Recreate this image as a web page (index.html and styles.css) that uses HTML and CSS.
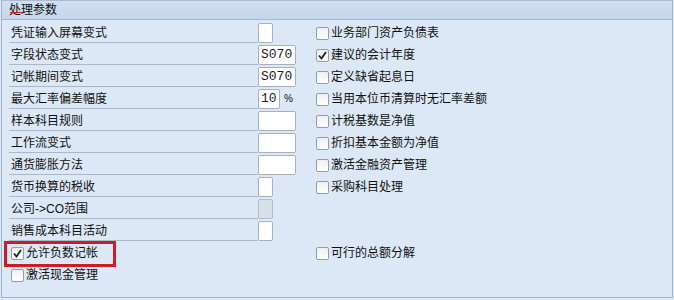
FILE: index.html
```html
<!DOCTYPE html>
<html lang="zh-CN">
<head>
    <meta charset="UTF-8">
    <meta name="viewport" content="width=device-width, initial-scale=1.0">
    <title>处理参数</title>
    <link rel="stylesheet" href="styles.css">
</head>
<body>
    <div class="panel">
        <div class="panel-head"><span class="title">处理参数</span></div>
        <div class="panel-body">
            <div class="col-left">
                <div class="row"><span class="label">凭证输入屏幕变式</span><span class="field tiny"></span></div>
                <div class="row"><span class="label">字段状态变式</span><span class="field wide">S070</span></div>
                <div class="row"><span class="label">记帐期间变式</span><span class="field wide">S070</span></div>
                <div class="row"><span class="label">最大汇率偏差幅度</span><span class="field mid">10</span><span class="unit">%</span></div>
                <div class="row"><span class="label">样本科目规则</span><span class="field wide"></span></div>
                <div class="row"><span class="label">工作流变式</span><span class="field wide"></span></div>
                <div class="row"><span class="label">通货膨胀方法</span><span class="field wide"></span></div>
                <div class="row"><span class="label">货币换算的税收</span><span class="field tiny"></span></div>
                <div class="row"><span class="label">公司-&gt;CO范围</span><span class="field tiny off"></span></div>
                <div class="row"><span class="label">销售成本科目活动</span><span class="field tiny"></span></div>
                <div class="row">
                    <span class="check highlight"><span class="box on"><svg viewBox="0 0 13 13" width="13" height="13"><polyline points="3,6.5 5.5,9.5 10,3" /></svg></span>允许负数记帐</span>
                </div>
                <div class="row">
                    <span class="check"><span class="box"></span>激活现金管理</span>
                </div>
            </div>
            <div class="col-right">
                <div class="row"><span class="check"><span class="box"></span>业务部门资产负债表</span></div>
                <div class="row"><span class="check"><span class="box on"><svg viewBox="0 0 13 13" width="13" height="13"><polyline points="3,6.5 5.5,9.5 10,3" /></svg></span>建议的会计年度</span></div>
                <div class="row"><span class="check"><span class="box"></span>定义缺省起息日</span></div>
                <div class="row"><span class="check"><span class="box"></span>当用本位币清算时无汇率差额</span></div>
                <div class="row"><span class="check"><span class="box"></span>计税基数是净值</span></div>
                <div class="row"><span class="check"><span class="box"></span>折扣基本金额为净值</span></div>
                <div class="row"><span class="check"><span class="box"></span>激活金融资产管理</span></div>
                <div class="row"><span class="check"><span class="box"></span>采购科目处理</span></div>
                <div class="row"></div>
                <div class="row"></div>
                <div class="row"><span class="check"><span class="box"></span>可行的总额分解</span></div>
            </div>
        </div>
    </div>
</body>
</html>
```

FILE: styles.css
```css
body {
    margin: 0;
    padding: 0;
    background: #dce8f5;
    font-family: "Liberation Sans", "Noto Sans CJK SC", sans-serif;
    font-size: 12px;
    color: #111;
}
.panel {
    margin-left: 1px;
    width: 670px;
    height: 297px;
    background: #dce8f5;
    border: 1px solid #a3b3c8;
    border-top: none;
}
.panel-head {
    height: 18px;
    line-height: 18px;
    padding-left: 7px;
    background: linear-gradient(#d2e0f1, #c4d6ec);
    border-top: 1px solid #a9bbd2;
    border-bottom: 1px solid #a2b7d1;
}
.title {
    position: relative;
}
.title::after {
    content: "";
    position: absolute;
    left: 1px;
    top: 9px;
    width: 12px;
    height: 1px;
    background: #d0242c;
}
.panel-body {
    display: flex;
    padding: 2px 0 0 7px;
}
.col-left {
    width: 307px;
}
.row {
    height: 22px;
    display: flex;
    align-items: flex-start;
}
.label {
    width: 247px;
    height: 17px;
    padding: 3px 0 0 2px;
    line-height: 17px;
    border-bottom: 1px solid #a9b8cb;
    white-space: nowrap;
}
.field {
    box-sizing: border-box;
    height: 20px;
    margin-top: 1px;
    background: #fff;
    border: 1px solid #a9b0ba;
    border-radius: 2px;
    font-family: "Liberation Mono", monospace;
    font-size: 13px;
    line-height: 18px;
    padding: 0 2px;
    color: #222;
}
.field.tiny {
    width: 15px;
}
.field.wide {
    width: 38px;
}
.field.mid {
    width: 22px;
}
.field.off {
    background: #d8e1ea;
    border-color: #b4bcc6;
}
.unit {
    margin: 4px 0 0 4px;
    font-size: 10px;
    line-height: 14px;
}
.check {
    display: flex;
    align-items: center;
    gap: 2px;
    height: 22px;
    line-height: 22px;
    white-space: nowrap;
    position: relative;
}
.col-left .check {
    padding-left: 2px;
}
.box {
    box-sizing: border-box;
    width: 13px;
    height: 13px;
    background: linear-gradient(#f0f0f0, #fff);
    border: 1px solid #949ca8;
    border-radius: 2px;
    display: flex;
}
.box svg {
    margin: -1px;
    fill: none;
    stroke: #222;
    stroke-width: 1.8;
}
.highlight::after {
    content: "";
    position: absolute;
    left: -5px;
    top: -1px;
    width: 106px;
    height: 20px;
    border: 3px solid #cc1d26;
}
```
